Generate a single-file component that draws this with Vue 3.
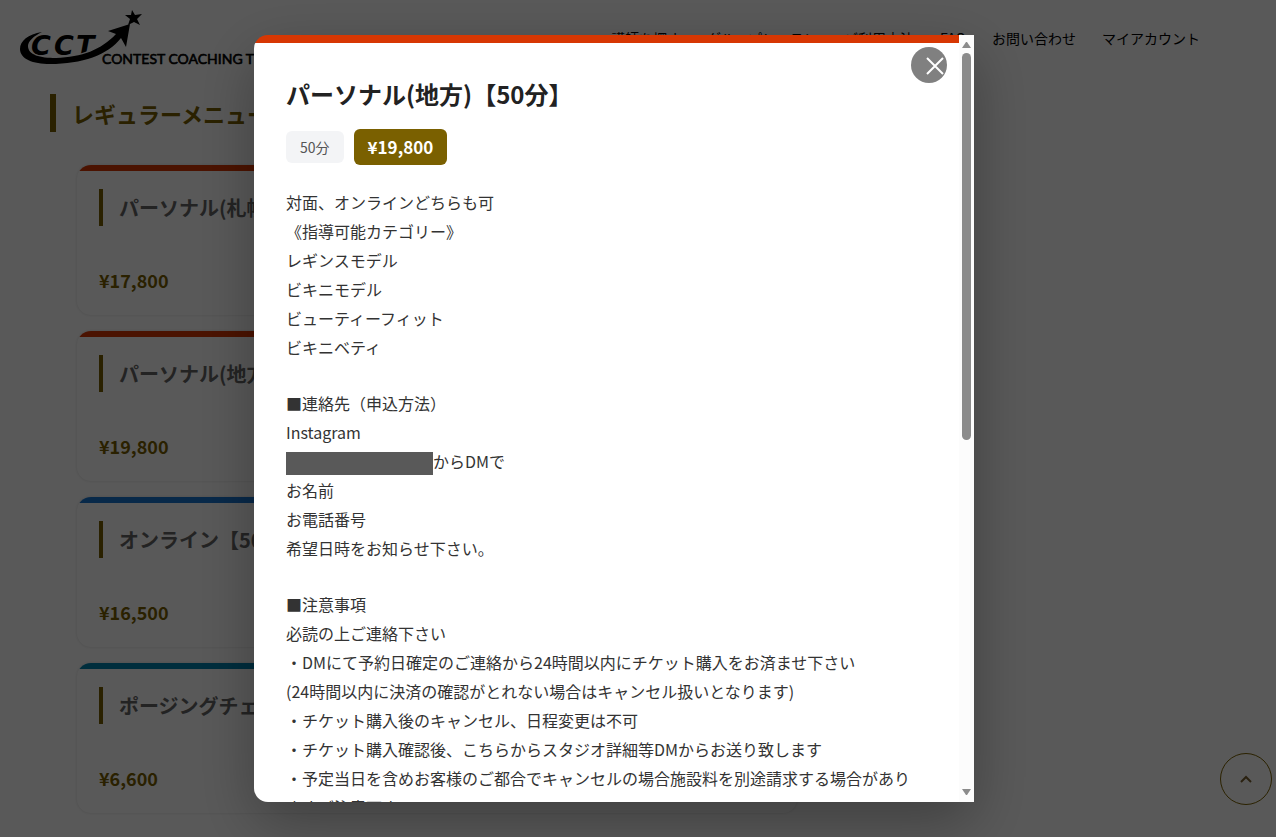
<template>
  <div class="page">
    <header class="site-header">
      <a href="#" class="logo" aria-label="CONTEST COACHING TEAM">
        <svg class="logo-mark" width="280" height="60" viewBox="20 8 280 60">
          <text class="logo-cct" x="31 54 76" y="55">CCT</text>
          <path
            class="logo-arrow"
            d="M42 32 C28 34 20 41 20 49 C20 59 33 64 50 64 C82 64 108 55 121 38 L126 47 L130 24 L108 31 L116 34 C101 50 82 57 56 58 C40 58 28 55 28 46 C28 41 34 36 42 32 Z"
          />
          <path d="M132 10 L135 15 L142 14 L137 19 L140 25 L134 22 L128 25 L130 19 L125 15 L131 15 Z" />
          <text class="logo-name" x="102" y="64">CONTEST COACHING TEAM</text>
        </svg>
      </a>
      <nav class="site-nav">
        <a v-for="item in navItems" :key="item" href="#">{{ item }}</a>
      </nav>
    </header>

    <main class="content">
      <h2 class="section-title">レギュラーメニュー</h2>
      <div class="menu-list">
        <article v-for="menu in menus" :key="menu.title" class="menu-card" :class="menu.type">
          <h3>{{ menu.title }}</h3>
          <p class="menu-price">{{ menu.price }}</p>
        </article>
      </div>
    </main>

    <button class="page-top" type="button" aria-label="ページトップへ">
      <svg width="14" height="10" viewBox="0 0 14 10">
        <path d="M2 8 L7 3 L12 8" />
      </svg>
    </button>

    <div v-if="isOpen" class="overlay">
      <div class="modal" role="dialog" aria-modal="true" aria-labelledby="modal-title">
        <div class="modal-panel">
          <div class="modal-line"></div>
          <div class="modal-body">
            <h2 id="modal-title">パーソナル(地方)【50分】</h2>
            <div class="tags">
              <span class="tag-time">50分</span>
              <span class="tag-price">¥19,800</span>
            </div>
            <div class="detail">
              <section v-for="(block, i) in detail" :key="i">
                <p v-for="line in block" :key="line">
                  <span v-if="line === 'からDMで'" class="account"></span>{{ line }}
                </p>
              </section>
            </div>
          </div>
        </div>
        <div class="scrollbar" aria-hidden="true">
          <svg width="9" height="7" viewBox="0 0 9 7"><path d="M0 7 L4 1 L5 1 L9 7 Z" /></svg>
          <div class="track"><div class="thumb"></div></div>
          <svg width="9" height="7" viewBox="0 0 9 7"><path d="M0 0 L4 6 L5 6 L9 0 Z" /></svg>
        </div>
        <button class="close-btn" type="button" aria-label="閉じる" @click="isOpen = false">
          <svg width="36" height="36" viewBox="0 0 36 36">
            <path d="M16 11 L32 27 M32 11 L16 27" />
          </svg>
        </button>
      </div>
    </div>
  </div>
</template>

<script setup>
import { ref } from 'vue';

const isOpen = ref(true);

const navItems = ['講師を探す', 'グループレッスン', 'ご利用方法', 'FAQ', 'お問い合わせ', 'マイアカウント'];

const menus = [
  { title: 'パーソナル(札幌)【50分】', price: '¥17,800', type: 'personal' },
  { title: 'パーソナル(地方)【50分】', price: '¥19,800', type: 'personal' },
  { title: 'オンライン【50分】', price: '¥16,500', type: 'online' },
  { title: 'ポージングチェック', price: '¥6,600', type: 'posing' },
];

const detail = [
  [
    '対面、オンラインどちらも可',
    '《指導可能カテゴリー》',
    'レギンスモデル',
    'ビキニモデル',
    'ビューティーフィット',
    'ビキニベティ',
  ],
  [
    '■連絡先（申込方法）',
    'Instagram',
    'からDMで',
    'お名前',
    'お電話番号',
    '希望日時をお知らせ下さい。',
  ],
  [
    '■注意事項',
    '必読の上ご連絡下さい',
    '・DMにて予約日確定のご連絡から24時間以内にチケット購入をお済ませ下さい',
    '(24時間以内に決済の確認がとれない場合はキャンセル扱いとなります)',
    '・チケット購入後のキャンセル、日程変更は不可',
    '・チケット購入確認後、こちらからスタジオ詳細等DMからお送り致します',
    '・予定当日を含めお客様のご都合でキャンセルの場合施設料を別途請求する場合があり\nますご注意下さい',
  ],
];
</script>

<style>
body {
  margin: 0;
  overflow: hidden;
}
</style>

<style scoped>
.page {
  min-height: 100vh;
  background: #fff;
  color: #000;
  font-family: "Noto Sans CJK JP", "Noto Sans", sans-serif;
}

h2,
h3,
p {
  margin: 0;
}

.site-header {
  display: flex;
  align-items: center;
  justify-content: space-between;
  height: 76px;
  padding: 0 76px 0 20px;
}

.logo-mark {
  display: block;
}

.logo-cct {
  font: italic bold 27px "DejaVu Sans", sans-serif;
}

.logo-arrow {
  stroke: #fff;
  stroke-width: 2;
  paint-order: stroke;
}

.logo-name {
  font: 14px Lato, sans-serif;
  stroke: #000;
  stroke-width: 0.6;
}

.site-nav {
  display: flex;
  gap: 26px;
}

.site-nav a {
  color: #000;
  font-size: 14px;
  line-height: 20px;
  text-decoration: none;
  white-space: nowrap;
}

.content {
  padding: 18px 50px 0;
}

.section-title {
  border-left: 6px solid #7a6000;
  padding-left: 16px;
  color: #7a6000;
  font-size: 22px;
  line-height: 38px;
}

.menu-list {
  display: flex;
  flex-direction: column;
  gap: 16px;
  max-width: 720px;
  padding: 33px 0 25px 27px;
}

.menu-card {
  height: 150px;
  border-radius: 14px;
  box-shadow: 0 0 3px rgba(0, 0, 0, 0.15);
  overflow: hidden;
}

.menu-card::before {
  content: "";
  display: block;
  height: 6px;
}

.menu-card.personal::before {
  background: #d73703;
}

.menu-card.online::before {
  background: #1976d2;
}

.menu-card.posing::before {
  background: #0083b0;
}

.menu-card h3 {
  margin: 18px 22px 0;
  border-left: 4px solid #7a6000;
  padding-left: 16px;
  color: #666;
  font-size: 20px;
  line-height: 37px;
}

.menu-price {
  margin: 39px 22px 0;
  color: #7a6000;
  font-size: 18px;
  font-weight: bold;
  line-height: 30px;
}

.page-top {
  position: fixed;
  right: 4px;
  bottom: 32px;
  display: flex;
  align-items: center;
  justify-content: center;
  width: 52px;
  height: 52px;
  padding: 0;
  border: 1px solid #7a6000;
  border-radius: 50%;
  background: #fff;
}

.page-top path {
  fill: none;
  stroke: #7a6030;
  stroke-width: 2;
}

.overlay {
  position: fixed;
  inset: 0;
  display: flex;
  justify-content: center;
  padding: 35px 48px 35px 0;
  background: rgba(0, 0, 0, 0.65);
}

.modal {
  position: relative;
  display: flex;
  width: 100%;
  max-width: 720px;
  border-radius: 14px 0 0 14px;
  box-shadow: 0 20px 60px rgba(0, 0, 0, 0.3);
}

.modal-panel {
  flex: 1;
  min-width: 0;
  border-radius: 14px 0 0 14px;
  background: #fff;
  overflow-y: auto;
  scrollbar-width: none;
}

.modal-line {
  height: 8px;
  background: #d73703;
}

.modal-body {
  padding: 33px 32px;
}

.modal-body h2 {
  color: #222;
  font-size: 24px;
  line-height: 36px;
}

.tags {
  display: flex;
  align-items: center;
  gap: 10px;
  margin: 17px 0 23px;
}

.tag-time,
.tag-price {
  padding: 0 14px;
  border-radius: 6px;
}

.tag-time {
  background: #f3f4f6;
  color: #555;
  font-size: 14px;
  line-height: 32px;
}

.tag-price {
  background: #7a6000;
  color: #fff;
  font-size: 17px;
  font-weight: bold;
  line-height: 36px;
}

.detail {
  display: flex;
  flex-direction: column;
  gap: 27px;
  color: #333;
  font-size: 16px;
  line-height: 29px;
}

.detail p {
  white-space: pre-line;
}

.account {
  display: inline-block;
  width: 147px;
  height: 23px;
  background: #595959;
  vertical-align: middle;
}

.scrollbar {
  display: flex;
  flex-direction: column;
  align-items: center;
  gap: 5px;
  width: 15px;
  padding: 6px 0;
  box-sizing: border-box;
  background: #fcfcfc;
}

.scrollbar path {
  fill: #8b8b8b;
}

.track {
  flex: 1;
}

.thumb {
  width: 9px;
  height: 53%;
  border-radius: 5px;
  background: #8b8b8b;
}

.close-btn {
  position: absolute;
  top: 12px;
  right: 27px;
  width: 36px;
  height: 36px;
  padding: 0;
  border: none;
  border-radius: 50%;
  background: #808080;
  cursor: pointer;
}

.close-btn svg {
  display: block;
}

.close-btn path {
  fill: none;
  stroke: #fff;
  stroke-width: 2;
}
</style>
